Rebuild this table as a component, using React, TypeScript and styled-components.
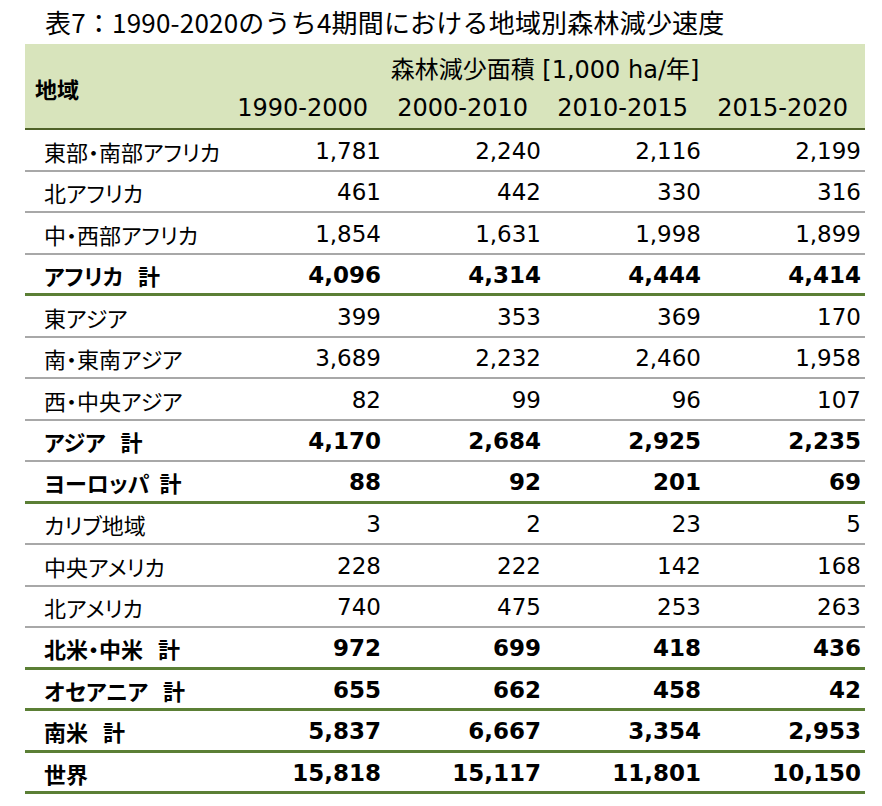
import React from "react";
import styled, { createGlobalStyle, css } from "styled-components";

const GlobalStyle = createGlobalStyle`
  html, body {
    margin: 0;
    padding: 0;
    background: #ffffff;
  }
  body {
    font-family: "DejaVu Sans", "Noto Sans CJK JP", sans-serif;
    color: #000;
  }
`;

const Page = styled.div`
  width: 882px;
  height: 806px;
  box-sizing: border-box;
  padding-left: 25px;
  background: #fff;
`;

const Title = styled.h1`
  margin: 0;
  padding-left: 20px;
  height: 44px;
  line-height: 43px;
  font-family: "Noto Sans CJK JP", sans-serif;
  font-weight: 400;
  font-size: 26px;
  letter-spacing: 0.2px;
  color: #000;
  white-space: nowrap;
`;

const Table = styled.div`
  width: 840px;
`;

const Header = styled.div`
  display: grid;
  grid-template-columns: 200px repeat(4, 160px);
  grid-template-rows: 42px 42px;
  background: #d8e4bc;
  border-bottom: 2px solid #4f6228;
`;

const HeadLabel = styled.div`
  grid-row: 1 / 3;
  grid-column: 1;
  display: flex;
  align-items: center;
  padding-left: 10px;
  padding-top: 3px;
  font-family: "Noto Sans CJK JP", sans-serif;
  font-weight: 700;
  font-size: 22px;
`;

const HeadUnit = styled.div`
  grid-row: 1;
  grid-column: 2 / 6;
  display: flex;
  align-items: flex-end;
  justify-content: center;
  padding-bottom: 1px;
  font-size: 24px;
  white-space: nowrap;
`;

const HeadYear = styled.div`
  display: flex;
  align-items: center;
  justify-content: flex-end;
  padding-right: 17px;
  padding-top: 2px;
  font-size: 24px;
  white-space: nowrap;
`;

const Row = styled.div<{ $line: "gray" | "green"; $total?: boolean }>`
  display: grid;
  grid-template-columns: 200px repeat(4, 160px);
  height: 41.5px;
  box-sizing: border-box;
  align-items: center;
  ${(p) =>
    p.$line === "green"
      ? css`border-bottom: 3px solid #5b7f35;`
      : css`border-bottom: 2px solid #a8a8a8;`}
  font-weight: ${(p) => (p.$total ? 700 : 400)};
`;

const Label = styled.div`
  padding-left: 19px;
  padding-top: 2px;
  font-family: "Noto Sans CJK JP", sans-serif;
  font-size: 22px;
  line-height: 30px;
  font-feature-settings: "palt";
  white-space: pre;
`;

const Num = styled.div`
  text-align: right;
  padding-right: 4px;
  padding-top: 2px;
  font-size: 23px;
  line-height: 30px;
`;

type RowData = {
  label: string;
  values: string[];
  total?: boolean;
  line: "gray" | "green";
};

const rows: RowData[] = [
  { label: "東部・南部アフリカ", values: ["1,781", "2,240", "2,116", "2,199"], line: "gray" },
  { label: "北アフリカ", values: ["461", "442", "330", "316"], line: "gray" },
  { label: "中・西部アフリカ", values: ["1,854", "1,631", "1,998", "1,899"], line: "gray" },
  { label: "アフリカ   計", values: ["4,096", "4,314", "4,444", "4,414"], total: true, line: "green" },
  { label: "東アジア", values: ["399", "353", "369", "170"], line: "gray" },
  { label: "南・東南アジア", values: ["3,689", "2,232", "2,460", "1,958"], line: "gray" },
  { label: "西・中央アジア", values: ["82", "99", "96", "107"], line: "gray" },
  { label: "アジア   計", values: ["4,170", "2,684", "2,925", "2,235"], total: true, line: "gray" },
  { label: "ヨーロッパ  計", values: ["88", "92", "201", "69"], total: true, line: "green" },
  { label: "カリブ地域", values: ["3", "2", "23", "5"], line: "gray" },
  { label: "中央アメリカ", values: ["228", "222", "142", "168"], line: "gray" },
  { label: "北アメリカ", values: ["740", "475", "253", "263"], line: "gray" },
  { label: "北米・中米   計", values: ["972", "699", "418", "436"], total: true, line: "green" },
  { label: "オセアニア   計", values: ["655", "662", "458", "42"], total: true, line: "green" },
  { label: "南米   計", values: ["5,837", "6,667", "3,354", "2,953"], total: true, line: "green" },
  { label: "世界", values: ["15,818", "15,117", "11,801", "10,150"], total: true, line: "green" },
];

const years = ["1990-2000", "2000-2010", "2010-2015", "2015-2020"];

export default function App() {
  return (
    <>
      <GlobalStyle />
      <Page>
        <Title>表7：1990-2020のうち4期間における地域別森林減少速度</Title>
        <Table>
          <Header>
            <HeadLabel>地域</HeadLabel>
            <HeadUnit>森林減少面積 [1,000 ha/年]</HeadUnit>
            {years.map((y) => (
              <HeadYear key={y}>{y}</HeadYear>
            ))}
          </Header>
          {rows.map((r) => (
            <Row key={r.label} $line={r.line} $total={r.total}>
              <Label>{r.label}</Label>
              {r.values.map((v, i) => (
                <Num key={i}>{v}</Num>
              ))}
            </Row>
          ))}
        </Table>
      </Page>
    </>
  );
}
